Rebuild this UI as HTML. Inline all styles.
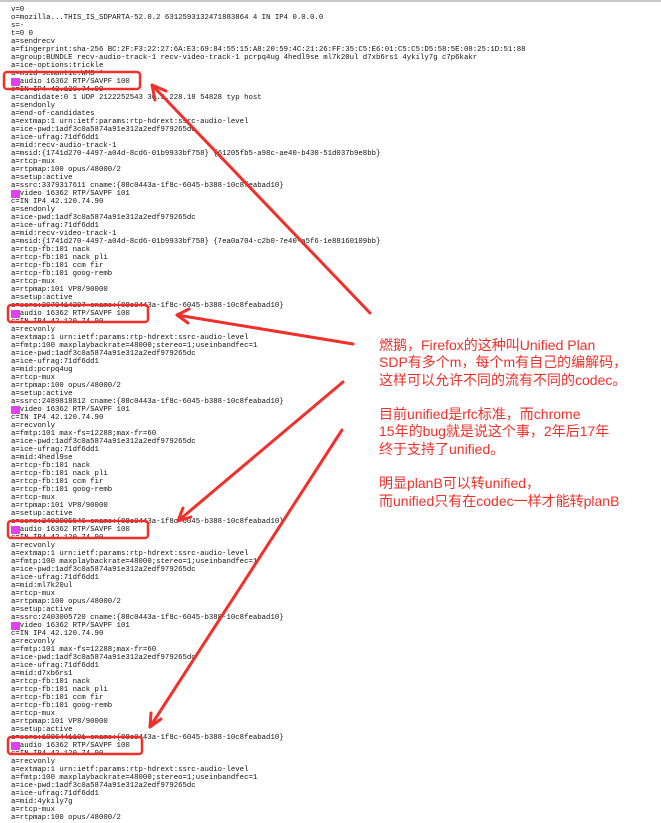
<!DOCTYPE html>
<html><head><meta charset="utf-8"><style>
body{margin:0;width:661px;height:823px;background:#fff;overflow:hidden;position:relative}
#top{position:absolute;left:0;top:0;width:661px;height:2px;background:#c8c8c8}
pre{position:absolute;left:11px;top:6px;margin:0;font-family:"Liberation Mono",monospace;font-size:7.33px;line-height:8px;color:#111}
.m{background:#e040f0;color:#e040f0}
.note{position:absolute;left:379px;top:337px;font-family:"Liberation Sans","Noto Sans CJK SC",sans-serif;font-size:14px;line-height:17.3px;color:#f0302a;white-space:nowrap}
svg{position:absolute;left:0;top:0}
</style></head><body>
<div id="top"></div>
<pre>v=0
o=mozilla...THIS_IS_SDPARTA-52.0.2 6312593132471883864 4 IN IP4 0.0.0.0
s=-
t=0 0
a=sendrecv
a=fingerprint:sha-256 BC:2F:F3:22:27:6A:E3:69:84:55:15:A8:20:59:4C:21:26:FF:35:C5:E6:01:C5:C5:D5:58:5E:08:25:1D:51:88
a=group:BUNDLE recv-audio-track-1 recv-video-track-1 pcrpq4ug 4hedl9se ml7k20ul d7xb6rs1 4ykily7g c7p6kakr
a=ice-options:trickle
a=msid-semantic:WMS *
<span class="m">m=</span>audio 16362 RTP/SAVPF 100
c=IN IP4 42.120.74.90
a=candidate:0 1 UDP 2122252543 30.5.228.18 54828 typ host
a=sendonly
a=end-of-candidates
a=extmap:1 urn:ietf:params:rtp-hdrext:ssrc-audio-level
a=ice-pwd:1adf3c0a5874a91e312a2edf979265dc
a=ice-ufrag:71df6dd1
a=mid:recv-audio-track-1
a=msid:{1741d270-4497-a04d-8cd6-01b9933bf758} {61205fb5-a98c-ae40-b430-51d037b9e8bb}
a=rtcp-mux
a=rtpmap:100 opus/48000/2
a=setup:active
a=ssrc:3379317611 cname:{88c0443a-1f8c-6045-b388-10c8feabad10}
<span class="m">m=</span>video 16362 RTP/SAVPF 101
c=IN IP4 42.120.74.90
a=sendonly
a=ice-pwd:1adf3c0a5874a91e312a2edf979265dc
a=ice-ufrag:71df6dd1
a=mid:recv-video-track-1
a=msid:{1741d270-4497-a04d-8cd6-01b9933bf758} {7ea0a704-c2b0-7e40-a5f6-1e88160109bb}
a=rtcp-fb:101 nack
a=rtcp-fb:101 nack pli
a=rtcp-fb:101 ccm fir
a=rtcp-fb:101 goog-remb
a=rtcp-mux
a=rtpmap:101 VP8/90000
a=setup:active
a=ssrc:2979414297 cname:{88c0443a-1f8c-6045-b388-10c8feabad10}
<span class="m">m=</span>audio 16362 RTP/SAVPF 100
c=IN IP4 42.120.74.90
a=recvonly
a=extmap:1 urn:ietf:params:rtp-hdrext:ssrc-audio-level
a=fmtp:100 maxplaybackrate=48000;stereo=1;useinbandfec=1
a=ice-pwd:1adf3c0a5874a91e312a2edf979265dc
a=ice-ufrag:71df6dd1
a=mid:pcrpq4ug
a=rtcp-mux
a=rtpmap:100 opus/48000/2
a=setup:active
a=ssrc:2489818812 cname:{88c0443a-1f8c-6045-b388-10c8feabad10}
<span class="m">m=</span>video 16362 RTP/SAVPF 101
c=IN IP4 42.120.74.90
a=recvonly
a=fmtp:101 max-fs=12288;max-fr=60
a=ice-pwd:1adf3c0a5874a91e312a2edf979265dc
a=ice-ufrag:71df6dd1
a=mid:4hedl9se
a=rtcp-fb:101 nack
a=rtcp-fb:101 nack pli
a=rtcp-fb:101 ccm fir
a=rtcp-fb:101 goog-remb
a=rtcp-mux
a=rtpmap:101 VP8/90000
a=setup:active
a=ssrc:2403005546 cname:{88c0443a-1f8c-6045-b388-10c8feabad10}
<span class="m">m=</span>audio 16362 RTP/SAVPF 100
c=IN IP4 42.120.74.90
a=recvonly
a=extmap:1 urn:ietf:params:rtp-hdrext:ssrc-audio-level
a=fmtp:100 maxplaybackrate=48000;stereo=1;useinbandfec=1
a=ice-pwd:1adf3c0a5874a91e312a2edf979265dc
a=ice-ufrag:71df6dd1
a=mid:ml7k20ul
a=rtcp-mux
a=rtpmap:100 opus/48000/2
a=setup:active
a=ssrc:2403005720 cname:{88c0443a-1f8c-6045-b388-10c8feabad10}
<span class="m">m=</span>video 16362 RTP/SAVPF 101
c=IN IP4 42.120.74.90
a=recvonly
a=fmtp:101 max-fs=12288;max-fr=60
a=ice-pwd:1adf3c0a5874a91e312a2edf979265dc
a=ice-ufrag:71df6dd1
a=mid:d7xb6rs1
a=rtcp-fb:101 nack
a=rtcp-fb:101 nack pli
a=rtcp-fb:101 ccm fir
a=rtcp-fb:101 goog-remb
a=rtcp-mux
a=rtpmap:101 VP8/90000
a=setup:active
a=ssrc:1886441101 cname:{88c0443a-1f8c-6045-b388-10c8feabad10}
<span class="m">m=</span>audio 16362 RTP/SAVPF 100
c=IN IP4 42.120.74.90
a=recvonly
a=extmap:1 urn:ietf:params:rtp-hdrext:ssrc-audio-level
a=fmtp:100 maxplaybackrate=48000;stereo=1;useinbandfec=1
a=ice-pwd:1adf3c0a5874a91e312a2edf979265dc
a=ice-ufrag:71df6dd1
a=mid:4ykily7g
a=rtcp-mux
a=rtpmap:100 opus/48000/2</pre>
<svg width="661" height="823" viewBox="0 0 661 823">
<g stroke="#f0302a" stroke-width="2.5" fill="none">
<rect x="4" y="72" width="136" height="17" rx="3"/>
<rect x="8" y="305" width="140" height="17" rx="3"/>
<rect x="8" y="521" width="140" height="17" rx="3"/>
<rect x="8" y="737" width="134" height="17" rx="3"/>
</g>
<g stroke="#f0302a" stroke-width="3" fill="none" stroke-linecap="round">
<path d="M370 313 L152 85 M152 85 L155 100 M152 85 L166 91"/>
<path d="M353 344 L177 315 M177 315 L189 309 M177 315 L188 323"/>
<path d="M343 382 L178 521 M178 521 L183 508 M178 521 L191 517"/>
<path d="M342 430 L150 727 M150 727 L151 713 M150 727 L161 719"/>
</g>
</svg>
<div class="note">燃鹅，Firefox的这种叫Unified Plan<br>SDP有多个m，每个m有自己的编解码，<br>这样可以允许不同的流有不同的codec。<br><br>目前unified是rfc标准，而chrome<br>15年的bug就是说这个事，2年后17年<br>终于支持了unified。<br><br>明显planB可以转unified，<br>而unified只有在codec一样才能转planB</div>
</body></html>
